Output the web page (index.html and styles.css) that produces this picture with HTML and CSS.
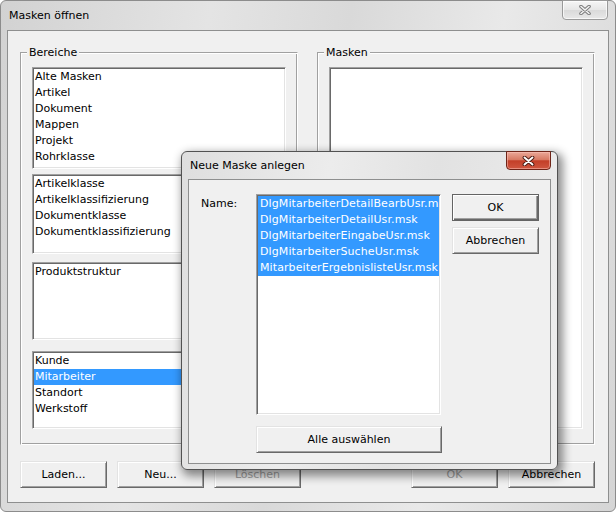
FILE: index.html
```html
<!DOCTYPE html>
<html lang="de">
  <head>
    <meta charset="UTF-8" />
    <title>Masken öffnen</title>
    <link rel="stylesheet" href="styles.css">
  </head>
  <body>
    <div class="window">
      <div class="titlebar">
        <span class="title">Masken öffnen</span>
        <span class="close-btn close-inactive">
          <svg width="12" height="10" viewBox="0 0 12 10">
            <path d="M2 1.5 L10 8.5 M10 1.5 L2 8.5" stroke="#7b7b7b" stroke-width="3.6" stroke-linecap="round" fill="none"/>
            <path d="M2 1.5 L10 8.5 M10 1.5 L2 8.5" stroke="#f4f4f4" stroke-width="1.6" stroke-linecap="round" fill="none"/>
          </svg>
        </span>
      </div>

      <div class="client">
        <div class="groups">
          <fieldset class="group">
            <legend>Bereiche</legend>
            <ul class="listbox lb-1">
              <li>Alte Masken</li>
              <li>Artikel</li>
              <li>Dokument</li>
              <li>Mappen</li>
              <li>Projekt</li>
              <li>Rohrklasse</li>
            </ul>
            <ul class="listbox lb-2">
              <li>Artikelklasse</li>
              <li>Artikelklassifizierung</li>
              <li>Dokumentklasse</li>
              <li>Dokumentklassifizierung</li>
            </ul>
            <ul class="listbox lb-3">
              <li>Produktstruktur</li>
            </ul>
            <ul class="listbox lb-4">
              <li>Kunde</li>
              <li class="selected">Mitarbeiter</li>
              <li>Standort</li>
              <li>Werkstoff</li>
            </ul>
          </fieldset>
          <fieldset class="group">
            <legend>Masken</legend>
            <ul class="listbox lb-masken"></ul>
          </fieldset>
        </div>

        <div class="button-row">
          <div class="btn-group">
            <button class="btn">Laden...</button>
            <button class="btn">Neu...</button>
            <button class="btn" disabled>Löschen</button>
          </div>
          <div class="btn-group">
            <button class="btn" disabled>OK</button>
            <button class="btn">Abbrechen</button>
          </div>
        </div>
      </div>

      <!-- modal on top of the main window -->
      <div class="dialog">
        <div class="dialog-titlebar">
          <span class="title">Neue Maske anlegen</span>
          <span class="close-btn close-active">
            <svg width="13" height="10" viewBox="0 0 13 10">
              <path d="M2.5 1.5 L10.5 8.5 M10.5 1.5 L2.5 8.5" stroke="#4a1a12" stroke-width="3.8" stroke-linecap="round" fill="none"/>
              <path d="M2.5 1.5 L10.5 8.5 M10.5 1.5 L2.5 8.5" stroke="#ffffff" stroke-width="1.9" stroke-linecap="round" fill="none"/>
            </svg>
          </span>
        </div>
        <div class="dialog-client">
          <label class="name-label">Name:</label>
          <ul class="listbox lb-names">
            <li class="selected">DlgMitarbeiterDetailBearbUsr.msk</li>
            <li class="selected">DlgMitarbeiterDetailUsr.msk</li>
            <li class="selected">DlgMitarbeiterEingabeUsr.msk</li>
            <li class="selected">DlgMitarbeiterSucheUsr.msk</li>
            <li class="selected">MitarbeiterErgebnislisteUsr.msk</li>
          </ul>
          <div class="dialog-buttons">
            <button class="btn btn-default">OK</button>
            <button class="btn">Abbrechen</button>
          </div>
          <button class="btn btn-all">Alle auswählen</button>
        </div>
      </div>
    </div>
  </body>
</html>
```

FILE: styles.css
```css
body {
  margin: 0;
  font-family: "DejaVu Sans", Verdana, sans-serif;
  font-size: 11px;
  color: #000;
  background: #fff;
}

.window {
  position: relative;
  width: 616px;
  height: 512px;
  box-sizing: border-box;
  border: 1px solid #8c8c8c;
  border-radius: 6px;
  padding: 0 6px 8px 6px;
  background: linear-gradient(100deg, #d2d2d2 0%, #e4e4e4 30%, #d9d9d9 50%, #e9e9e9 72%, #d5d5d5 100%);
}

.titlebar {
  height: 29px;
  display: flex;
  justify-content: space-between;
  align-items: flex-start;
}
.titlebar .title {
  padding: 8px 0 0 2px;
  font-size: 11px;
  line-height: 13px;
}

.close-btn {
  display: flex;
  align-items: center;
  justify-content: center;
  box-sizing: border-box;
  margin-top: -1px;
  border-radius: 0 0 4px 4px;
}
.close-inactive {
  width: 46px;
  height: 20px;
  margin-right: 1px;
  border: 1px solid #9a9a9a;
  background: linear-gradient(#f6f6f6, #e6e6e6 50%, #dadada 51%, #e8e8e8);
  box-shadow: inset 0 0 0 1px rgba(255, 255, 255, 0.7);
}
.close-active {
  width: 45px;
  height: 19px;
  border: 1px solid #6e2418;
  background: linear-gradient(#eaa898, #d87a64 45%, #c33f28 52%, #cf5640);
  box-shadow: inset 0 0 0 1px rgba(255, 200, 190, 0.5);
}

.client {
  height: 473px;
  box-sizing: border-box;
  border: 1px solid #8e8f8f;
  background: #f0f0f0;
  padding: 15px 13px 14px 12px;
  display: flex;
  flex-direction: column;
}

.groups {
  display: grid;
  grid-template-columns: 278px 278px;
  column-gap: 19px;
}

.group {
  margin: 0;
  min-width: 0;
  height: 399px;
  box-sizing: border-box;
  padding: 8px 11px 0 11px;
  border: 1px solid;
  border-color: #a0a0a0 #fff #fff #a0a0a0;
  box-shadow: inset 1px 1px #fff, inset -1px -1px #a0a0a0;
}
.group legend {
  padding: 0 2px;
  margin-left: -5px;
  line-height: 13px;
  background: #f0f0f0;
}

.listbox {
  list-style: none;
  margin: 0;
  padding: 1px;
  box-sizing: border-box;
  background: #fff;
  overflow: hidden;
  border: 1px solid;
  border-color: #a0a0a0 #fff #fff #a0a0a0;
  box-shadow: inset 1px 1px #696969, inset -1px -1px #e3e3e3;
}
.listbox li {
  line-height: 16px;
  height: 16px;
  padding-left: 1px;
  white-space: nowrap;
  overflow: hidden;
}
.listbox li.selected {
  background: #3399ff;
  color: #fff;
}

.lb-1 { height: 102px; }
.lb-2 { height: 80px; margin-top: 5px; }
.lb-3 { height: 78px; margin-top: 8px; }
.lb-4 { height: 78px; margin-top: 11px; }
.lb-masken { height: 362px; }

.button-row {
  display: flex;
  justify-content: space-between;
  margin-top: 16px;
}
.btn-group {
  display: flex;
  gap: 10px;
}

.btn {
  width: 87px;
  height: 27px;
  padding: 0;
  box-sizing: border-box;
  font-family: "DejaVu Sans", Verdana, sans-serif;
  font-size: 11px;
  color: #000;
  background: #f0f0f0;
  border: 1px solid;
  border-color: #e3e3e3 #696969 #696969 #e3e3e3;
  box-shadow: inset 1px 1px #fff, inset -1px -1px #a0a0a0;
}
.btn:disabled {
  color: #a0a0a0;
}
.btn-default {
  border-color: #646464;
  box-shadow: inset 1px 1px #fff, inset -1px -1px #696969, inset -2px -2px #a0a0a0;
}

/* dialog */
.dialog {
  position: absolute;
  left: 180px;
  top: 150px;
  width: 377px;
  height: 319px;
  box-sizing: border-box;
  border: 1px solid #525252;
  border-radius: 6px;
  padding: 0 6px 5px 6px;
  background: linear-gradient(100deg, #dedede 0%, #ececec 35%, #e2e2e2 60%, #eeeeee 100%);
  box-shadow: 3px 4px 10px 2px rgba(0, 0, 0, 0.45);
  display: flex;
  flex-direction: column;
}

.dialog-titlebar {
  height: 27px;
  display: flex;
  justify-content: space-between;
  align-items: flex-start;
}
.dialog-titlebar .title {
  padding: 7px 0 0 2px;
  line-height: 13px;
}

.dialog-client {
  flex: 1;
  box-sizing: border-box;
  border: 1px solid #8e8f8f;
  background: #f0f0f0;
  padding: 14px 11px 0 12px;
  display: grid;
  grid-template-columns: 44px 185px 87px;
  grid-template-rows: 221px 27px;
  column-gap: 11px;
  row-gap: 11px;
  align-content: start;
}

.name-label {
  padding-top: 2px;
  line-height: 16px;
}

.lb-names {
  height: 221px;
}
.lb-names li {
  padding-left: 2px;
  letter-spacing: 0.1px;
}

.dialog-buttons {
  display: flex;
  flex-direction: column;
  gap: 6px;
}

.btn-all {
  grid-column: 2;
  width: 186px;
}
```
